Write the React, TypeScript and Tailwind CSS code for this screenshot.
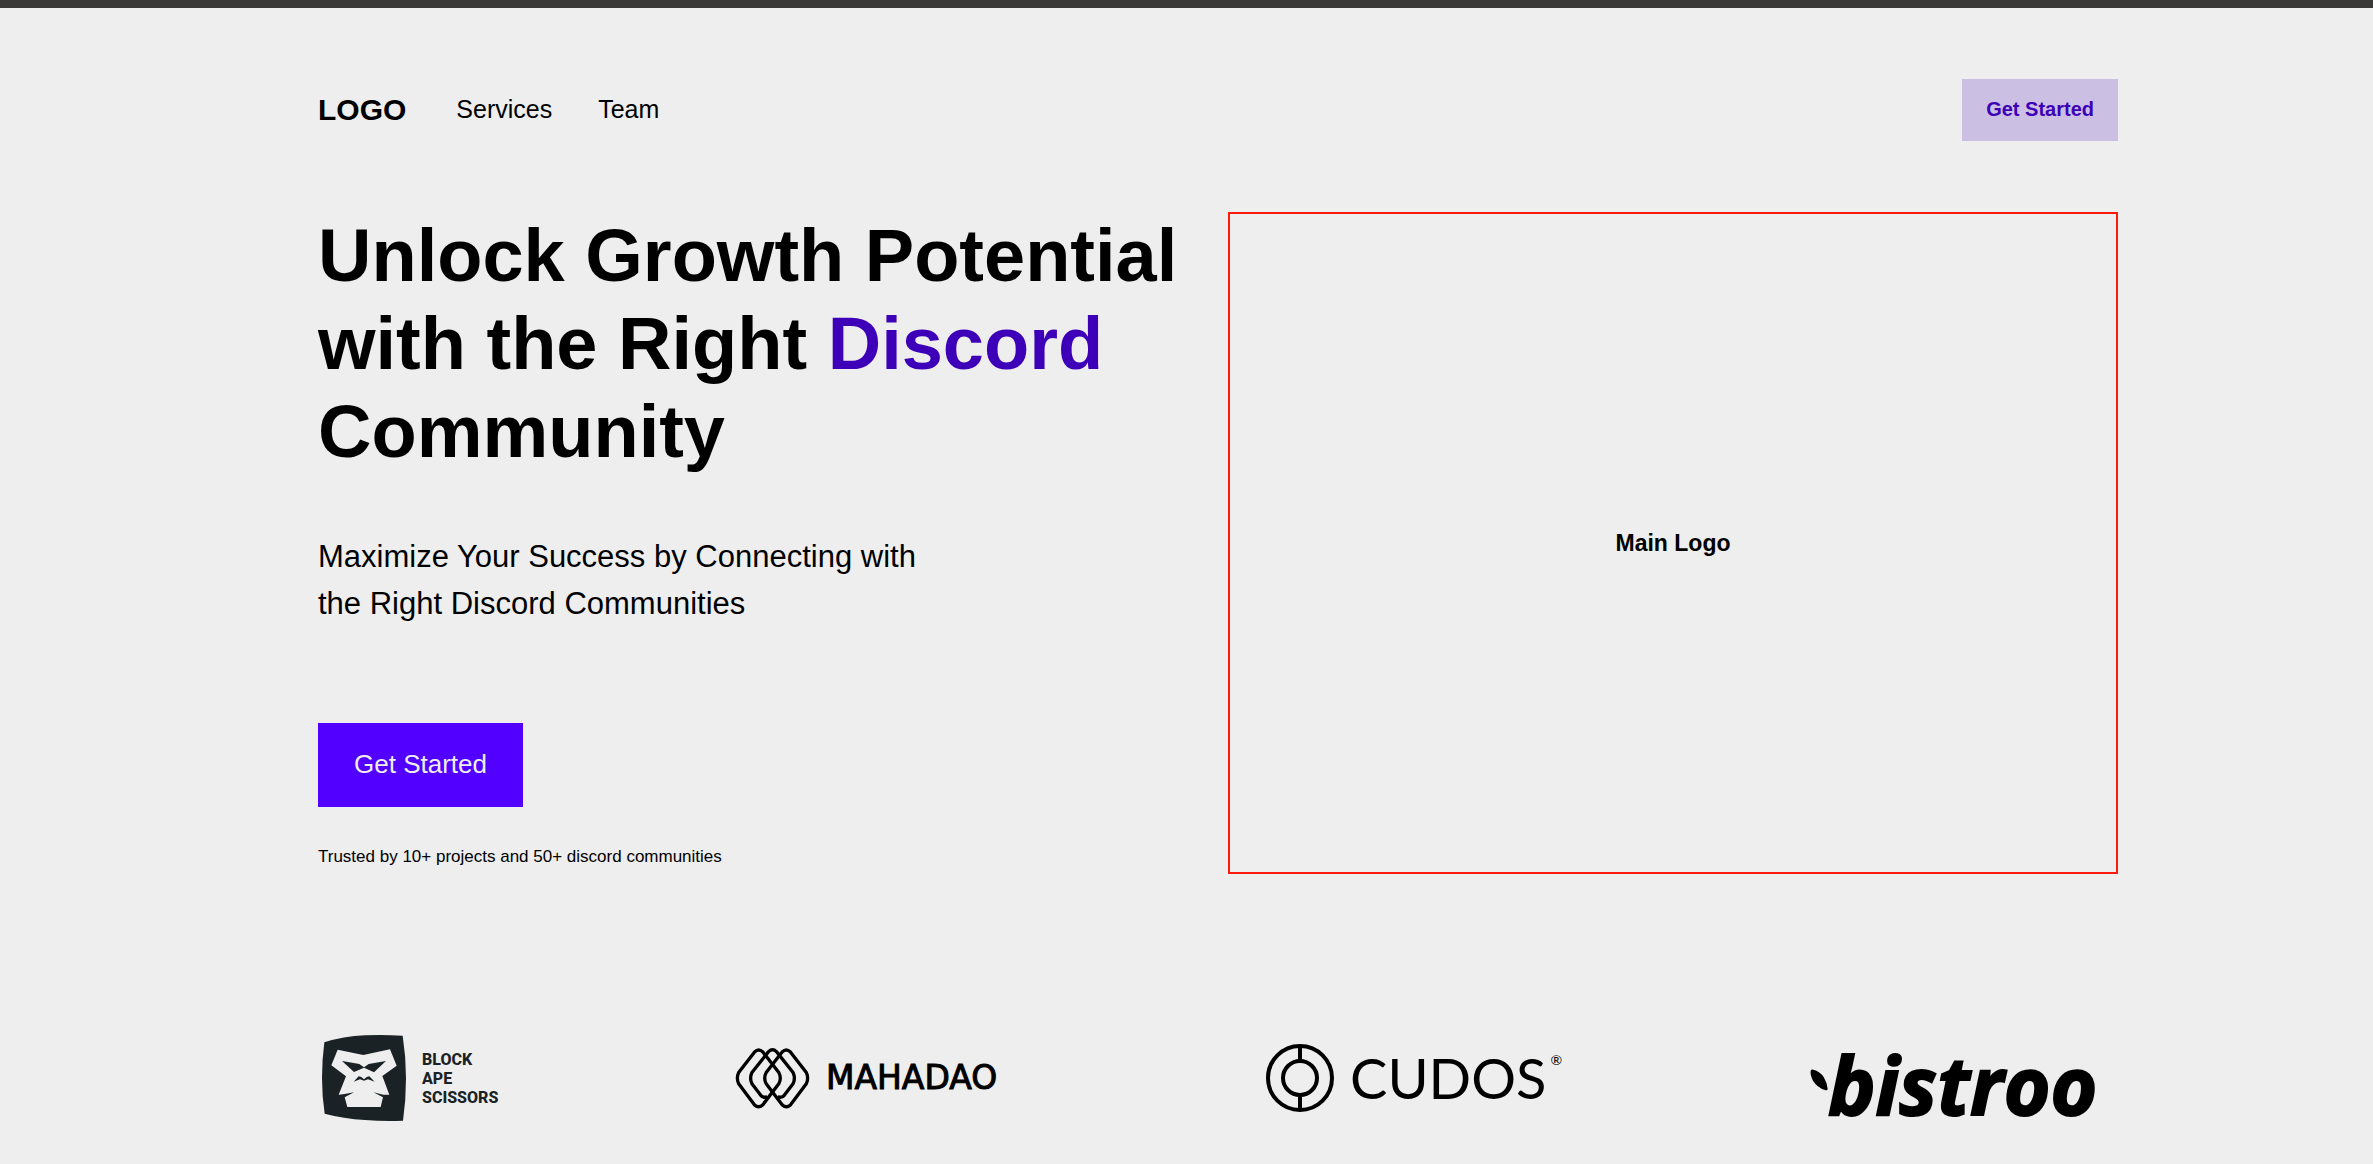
function ApeMark() {
  return (
    <svg viewBox="66 75 252 258" className="h-[86px] w-[84px] shrink-0" aria-hidden="true">
      <path
        fill="#1b2225"
        d="M73 97 Q130 79 195 76 Q250 74 308 77 Q318 140 318 205 Q318 270 309 332 Q250 334 195 330 Q130 326 74 311 Q66 260 66 204 Q66 150 73 97Z"
      />
      <path
        fill="#eeeeee"
        d="M113 119 L190 135 L270 118 L290 167 L247 198 L268 254 L250 254 L220 247 L249 262 L242 291 L142 291 L134 262 L162 247 L134 252 L116 254 L138 199 L94 166Z"
      />
      <path
        fill="#1b2225"
        d="M126 153 L178 162 L192 172 L206 162 L258 153 L222 187 L192 173 L162 186Z M161 215 L176 199 L184 201 L192 208 L200 201 L208 199 L224 215 L204 208 L192 212 L180 208Z"
      />
    </svg>
  );
}

function MahaMark() {
  return (
    <svg
      viewBox="72 82 224 184"
      className="h-[61px] w-[75px] shrink-0"
      fill="none"
      stroke="#000"
      strokeWidth="10"
      strokeLinejoin="round"
      aria-hidden="true"
    >
      <path d="M130 94 Q142 82 155 94 L203 156 Q212 173 203 190 L155 253 Q142 265 130 254 L82 190 Q74 173 82 156Z" />
      <path d="M238 94 Q226 82 213 94 L165 156 Q156 173 165 190 L213 253 Q226 265 238 254 L286 190 Q294 173 286 156Z" />
      <path d="M168 228 Q157 235 148 224 L122 190 Q114 173 122 156 L172 93 Q184 82 196 93 L246 156 Q254 173 246 190 L220 224 Q211 235 200 228" />
    </svg>
  );
}

function CudosMark() {
  return (
    <svg
      viewBox="0 0 68 68"
      className="size-[68px] shrink-0"
      fill="none"
      stroke="#000"
      strokeWidth="4"
      aria-hidden="true"
    >
      <circle cx="34" cy="34" r="32" />
      <circle cx="34" cy="34" r="17" />
      <path d="M34 2V17M34 51V66" />
    </svg>
  );
}

function Leaf() {
  return (
    <svg viewBox="58 146 54 66" className="mb-2 h-[22px] w-[18px] shrink-0" aria-hidden="true">
      <path d="M60 152 Q61 147 68 148 Q88 153 99 170 Q109 186 111 206 Q110 212 103 209 Q79 201 67 181 Q58 164 60 152Z" />
    </svg>
  );
}

export default function App() {
  return (
    <div className="min-h-screen border-t-8 border-[#3b3838] bg-[#eeeeee] pr-[255px] pl-[318px] font-['Liberation_Sans',Arial,sans-serif] text-black">
      <header className="flex items-center justify-between pt-[71px]">
        <nav className="flex items-center text-[25px]">
          <a href="#home" className="mr-[50px] pb-0.5 text-[30px] font-bold">LOGO</a>
          <a href="#services" className="mr-[46px]">Services</a>
          <a href="#team">Team</a>
        </nav>
        <button className="h-[62px] bg-[#cbc0e4] px-6 pb-0.5 text-xl font-bold text-[#3d00b8]">
          Get Started
        </button>
      </header>

      <main>
        <section className="grid grid-cols-2 gap-5 pt-[71px]">
          <div className="flex flex-col items-start">
            <h1 className="text-[74px] leading-[88px] font-bold">
              Unlock Growth Potential with the Right <span className="text-[#3d00b8]">Discord</span> Community
            </h1>
            <p className="mt-[57px] max-w-[620px] text-[31px] leading-[47px]">
              Maximize Your Success by Connecting with the Right Discord Communities
            </p>
            <button className="mt-24 h-[84px] bg-[#5200ff] px-9 pb-0.5 text-[26px] text-[#eeeeee]">
              Get Started
            </button>
            <p className="mt-9 text-[17px] leading-7">Trusted by 10+ projects and 50+ discord communities</p>
          </div>
          <div className="flex min-h-[662px] items-center justify-center border-2 border-[#ff1a0e]">
            <h2 className="text-[23px] font-bold">Main Logo</h2>
          </div>
        </section>

        <section aria-label="Partners" className="mt-[138px] flex h-[132px] items-center justify-between">
          <div className="flex w-[185px] items-center gap-4 pl-1">
            <ApeMark />
            <p className="font-[Roboto,sans-serif] text-base leading-[19px] font-extrabold text-[#1b2225]">
              BLOCK<br />APE<br />SCISSORS
            </p>
          </div>
          <div className="flex w-[299px] items-center gap-4">
            <MahaMark />
            <span className="font-['DejaVu_Sans',sans-serif] text-[33px] [-webkit-text-stroke:1px_black]">MAHADAO</span>
          </div>
          <div className="flex w-[312px] items-center">
            <CudosMark />
            <span className="ml-4 font-[Lato,sans-serif] text-[56px] leading-[68px]">CUDOS</span>
            <span className="mb-9 ml-1 font-[Lato,sans-serif] text-sm">®</span>
          </div>
          <div className="flex w-[308px] items-center pt-3">
            <Leaf />
            <span className="font-['Open_Sans',sans-serif] text-[80px] leading-[100px] font-bold italic [-webkit-text-stroke:2px_black]">
              bistroo
            </span>
          </div>
        </section>
      </main>
    </div>
  );
}
